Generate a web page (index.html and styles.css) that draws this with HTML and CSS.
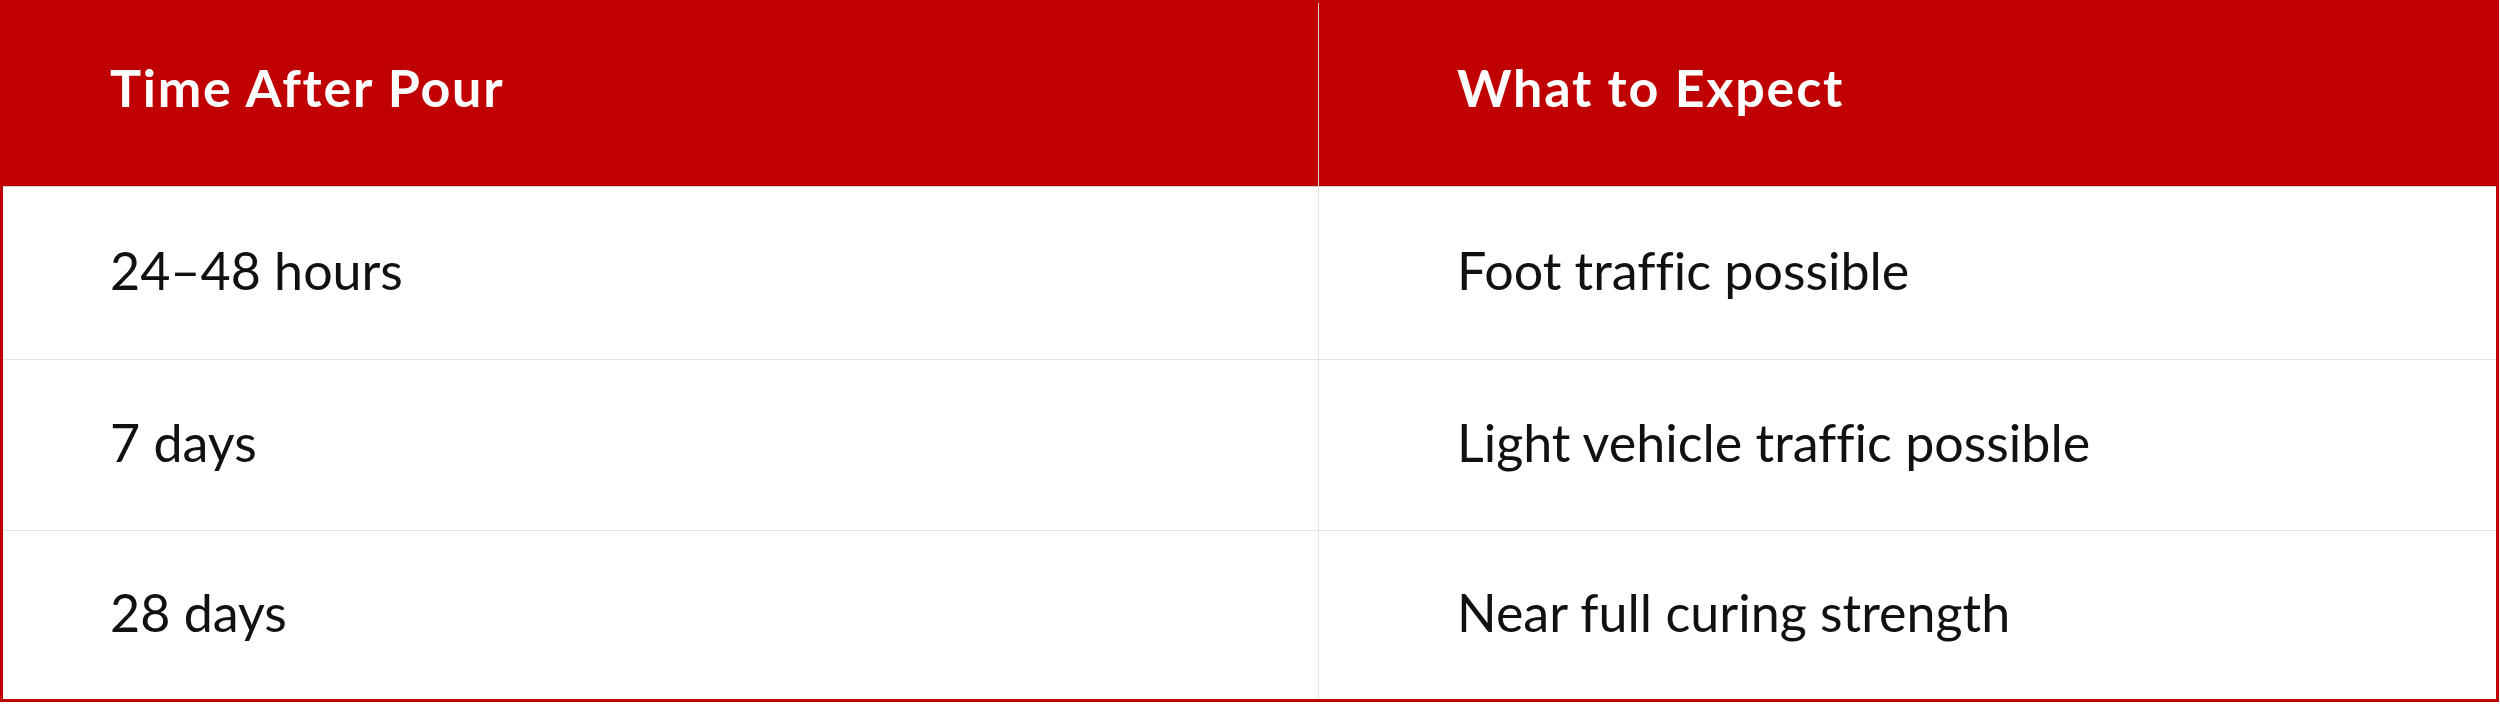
FILE: index.html
```html
<!DOCTYPE html>
<html lang="en">
<head>
<meta charset="utf-8">
<title>Curing timeline</title>
<link rel="stylesheet" href="styles.css">
</head>
<body>
<div class="table">
  <div class="cell head c1">Time After Pour</div>
  <div class="cell head c2">What to Expect</div>
  <div class="cell r1 c1">24–48 hours</div>
  <div class="cell r1 c2">Foot traffic possible</div>
  <div class="cell r2 c1">7 days</div>
  <div class="cell r2 c2">Light vehicle traffic possible</div>
  <div class="cell r3 c1">28 days</div>
  <div class="cell r3 c2">Near full curing strength</div>
</div>
</body>
</html>
```
FILE: styles.css
```css
html, body {
  margin: 0;
  padding: 0;
  background: #ffffff;
}
.table {
  box-sizing: border-box;
  width: 2499px;
  display: grid;
  grid-template-columns: 1316px 1177px;
  grid-template-rows: 184px 173px 171px 168px;
  border: 3px solid #c00000;
  font-family: Lato, "Noto Sans", sans-serif;
  font-size: 52px;
  color: #111111;
  font-variant-ligatures: none;
}
.cell {
  box-sizing: border-box;
  display: flex;
  align-items: center;
  border-bottom: 1px solid #e4e4e4;
  padding-bottom: 6px;
}
.c1 {
  border-right: 1px solid #e4e4e4;
  padding-left: 107px;
}
.c2 {
  padding-left: 138px;
}
.head {
  background: #c00000;
  color: #ffffff;
  font-weight: 700;
  letter-spacing: 1.8px;
  padding-bottom: 16px;
  border-bottom-color: #d6d6d6;
}
.head.c1 {
  border-right-color: #d6d6d6;
}
.r3 {
  border-bottom: none;
}
```
